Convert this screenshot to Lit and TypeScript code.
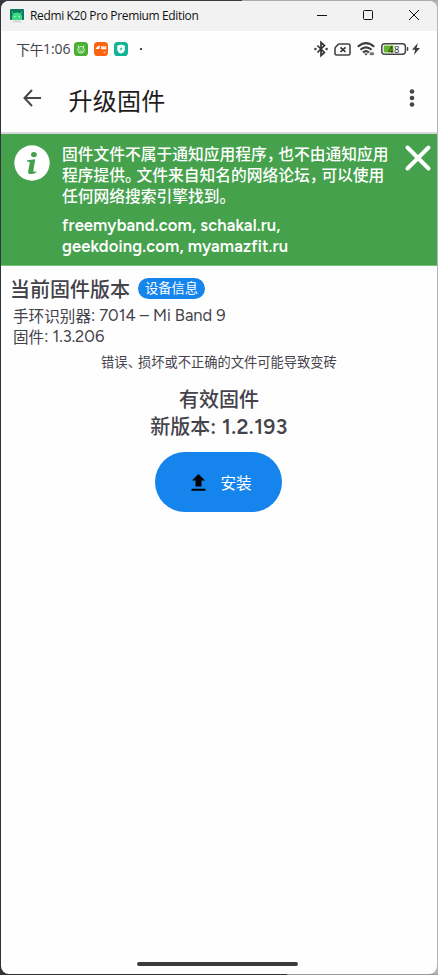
import { LitElement, html, css, svg } from "lit";
import { customElement } from "lit/decorators.js";

@customElement("app-root")
export class AppRoot extends LitElement {
  static styles = css`
    :host {
      display: block;
      width: 438px;
      height: 975px;
      overflow: hidden;
      box-sizing: border-box;
      padding: 1px 1px 1px 1px;
      background:
        linear-gradient(90deg, #3b3a42 0 242px, #aaa9ae 242px) top / 100% 1px no-repeat,
        linear-gradient(90deg, #333 0 287px, #999 287px) bottom / 100% 1px no-repeat,
        linear-gradient(90deg, #34333b 0 20px, #b5b5b5 20px);
      font-family: "Noto Sans CJK SC", sans-serif;
      color: #44434b;
    }
    * { box-sizing: border-box; }
    svg { display: block; flex: none; overflow: visible; }
    .window {
      height: 973px;
      display: flex;
      flex-direction: column;
      background: #fefefe;
      border-radius: 8px;
      overflow: hidden;
      white-space: nowrap;
    }
    .title {
      height: 30px;
      flex: none;
      background: #f2f2f2;
      display: flex;
      align-items: center;
      padding: 0 18px 0 9px;
      color: #111;
      font: 12px/30px "Open Sans", "Noto Sans", sans-serif;
    }
    .title .name { margin-left: 6px; flex: 1; letter-spacing: -0.36px; }
    .controls { display: flex; gap: 36px; align-items: center; margin-top: -2px; }
    .status {
      height: 36px;
      flex: none;
      display: flex;
      align-items: center;
      padding: 0 17px 0 15px;
      font-size: 14px;
    }
    .clock { display: flex; width: 55px; line-height: 20px; letter-spacing: -0.5px; }
    .clock .num { font-family: "Open Sans", sans-serif; font-size: 14px; letter-spacing: -0.1px; }
    .apps { display: flex; gap: 6px; margin-left: 2.5px; }
    .dot { width: 2px; height: 2px; background: #444; margin-left: 12px; flex: none; }
    .tray { margin-left: auto; display: flex; align-items: center; gap: 6px; }
    .charge { display: flex; align-items: center; gap: 3px; }
    .bar {
      height: 65px;
      flex: none;
      display: flex;
      align-items: center;
      padding: 0 22px 0 22px;
      color: #1d1c20;
    }
    .bar svg { margin-top: -4px; }
    .bar h1 { margin: 1px auto 0 26.5px; font-size: 24px; font-weight: 400; line-height: 36px; letter-spacing: 0.25px; }
    .banner {
      height: 134px;
      flex: none;
      border-top: 2px solid #d7d9d7;
      border-bottom: 1px solid #72c275;
      background: #46a14c;
      color: #fff;
      display: flex;
      padding: 11px 6px 0 13px;
      font-weight: 500;
    }
    .msg { margin: -2px auto 0 12px; font-size: 15.75px; line-height: 21px; }
    .msg div { height: 21px; }
    .p { letter-spacing: -4.2px; }
    .msg .links { margin-top: 9px; height: 42px; font-family: Figtree, Lato, sans-serif; font-weight: 600; font-size: 16.5px; letter-spacing: 0.15px; }
    .current { padding: 10px 0 0 9px; flex: none; }
    .head { display: flex; align-items: center; height: 25px; }
    .head h2 { margin: 0; font-size: 20px; font-weight: 500; line-height: 26px; }
    .pill {
      margin-left: 8px;
      width: 67px;
      height: 21px;
      border-radius: 11px;
      background: #1684ed;
      color: #fff;
      font-size: 13.3px;
      line-height: 20px;
      text-align: center;
    }
    .row { display: flex; height: 21px; line-height: 21px; font-size: 15.6px; padding-left: 3px; }
    .head + .row { margin-top: 4px; }
    .lat { font-family: Figtree, "Open Sans", sans-serif; white-space: pre; }
    .row .lat { font-size: 16.5px; }
    .warn { margin-top: 5px; text-align: center; font-size: 13.27px; line-height: 20px; }
    .warn .p { letter-spacing: -3px; }
    .result { text-align: center; margin-top: 13px; font-size: 20px; line-height: 27px; font-weight: 500; }
    .result .lat { font-weight: 600; font-size: 21px; letter-spacing: 0.4px; }
    .install {
      width: 127px;
      height: 60px;
      margin: 12px 0 0 154.4px;
      flex: none;
      border: 0;
      border-radius: 30px;
      background: #1684ed;
      color: #fff;
      display: flex;
      align-items: center;
      padding: 0 0 0 36px;
      font: 15.6px/24px "Noto Sans CJK SC", sans-serif;
    }
    .install span { margin-left: 14px; }
    .home { width: 161px; height: 4px; border-radius: 2px; background: #3b3939; margin: auto 0 8px 136px; flex: none; }
  `;

  private appIcon() {
    return html`<svg width="14" height="14" viewBox="0 0 14 14">
      <rect width="14" height="11" rx="1" fill="#0d7960" />
      <path d="M2 11V7.500a5 4 0 0 1 10 0V11z" fill="#3ddc84" />
      <path d="M3.500 5L2 2.500M10.500 5L12 2.500" stroke="#3ddc84" />
      <circle cx="4.8" cy="7.6" r=".7" fill="#fff" /><circle cx="9.2" cy="7.6" r=".7" fill="#fff" />
      <path d="M4 11.600h6l1.500 1.600H2.500z" fill="#d0d0d0" />
    </svg>`;
  }

  private badge(fill: string, glyph: unknown) {
    return html`<svg width="14" height="14" viewBox="0 0 14 14"><rect width="14" height="14" rx="3.6" fill=${fill} />${glyph}</svg>`;
  }

  render() {
    return html`<div class="window">
      <header class="title">
        ${this.appIcon()}<span class="name">Redmi K20 Pro Premium Edition</span>
        <div class="controls">
          <svg width="10" height="10" viewBox="0 0 10 10"><path d="M0 5.5h10" stroke="#111" /></svg>
          <svg width="10" height="10" viewBox="0 0 10 10"><rect x=".5" y=".5" width="9" height="9" rx="1" fill="none" stroke="#111" /></svg>
          <svg width="10" height="10" viewBox="0 0 10 10"><path d="M0 0l10 10M10 0L0 10" stroke="#111" /></svg>
        </div>
      </header>
      <div class="status">
        <div class="clock">下午<span class="num">1:06</span></div>
        <div class="apps">
          ${this.badge("#4caf35", svg`<g fill="none" stroke="#d9ffd0" stroke-width=".9"><circle cx="7" cy="7.8" r="3.3"/><path d="M4.8 5l-1-1.7M9.2 5l1-1.7M5.5 9q1.5 1 3 0"/></g><circle cx="5.8" cy="7.2" r=".6" fill="#d9ffd0"/><circle cx="8.2" cy="7.2" r=".6" fill="#d9ffd0"/>`)}
          ${this.badge("#fb6410", svg`<path d="M1.6 7q1-3 4.2-3.2L5.4 7zM7.2 4h5v3.2h-5z" fill="#fff"/><path d="M9 4v1.4M10.8 4v1.4" stroke="#fb6410" stroke-width=".8"/><rect x="9.6" y="9.8" width="1.8" height="1.4" fill="#ffc29b"/>`)}
          ${this.badge("#10b394", svg`<path d="M7 2.6l3.8 1.2v3.6Q10.600 10.200 7 11.600 3.400 10.200 3.200 7.400V3.800z" fill="#fff"/><path d="M7.600 4.500L5.500 7.500H7L6.400 9.600 8.600 6.500H7.200z" fill="#10b394"/>`)}
        </div>
        <span class="dot"></span>
        <div class="tray">
          <svg width="14" height="16" viewBox="0 0 14 16"><path d="M3.400 4.500l7 7L7 14.500V1.500l3.400 3-7 7" fill="none" stroke="#333" stroke-width="1.700"/><circle cx="1.400" cy="8" r="1.300" fill="#444"/><circle cx="12.600" cy="8" r="1.300" fill="#444"/></svg>
          <svg width="17" height="13" viewBox="0 0 17 13"><path d="M5.200 1H14.500Q16 1 16 2.500V10.500Q16 12 14.500 12H2.500Q1 12 1 10.500V5.300Q1 4.700 1.500 4.200L4 1.600Q4.500 1 5.200 1Z" fill="none" stroke="#444" stroke-width="1.600"/><path d="M6.500 4.300l5 4.700M11.500 4.300l-5 4.700" stroke="#333" stroke-width="1.600"/></svg>
          <svg width="18" height="14" viewBox="0 0 18 14"><g fill="none" stroke="#3d3d3d" stroke-width="2.100"><path d="M.8 4.700q8.200-7 16.400 0M3.400 7.700q5.600-4.600 11.200 0M6 10.400q3-2.500 6 0"/></g><path d="M7 11.500h4L9 13.500z" fill="#3d3d3d"/><rect x="12.500" y="10.300" width="4.500" height="3" rx="1.300" fill="#777"/></svg>
          <div class="charge">
            <svg width="28" height="12" viewBox="0 0 28 12"><rect x=".8" y=".8" width="23.600" height="10.400" rx="3" fill="#fff" stroke="#444" stroke-width="1.500"/><path d="M4 2.600h8.500v6.800H4q-1.300 0-1.300-1.300V3.900Q2.700 2.600 4 2.600z" fill="#62b82c"/><rect x="25.800" y="4" width="1.500" height="4" rx=".7" fill="#444"/><text x="7" y="9.500" font-family="Open Sans, sans-serif" font-size="9.500" fill="#222" textLength="11.500">48</text></svg>
            <svg width="8" height="12" viewBox="0 0 8 12"><path d="M5.800 0L0 6.800h3.200L1.800 12 8 5H4.600z" fill="#3d3d3d"/></svg>
          </div>
        </div>
      </div>
      <nav class="bar">
        <svg width="19" height="18" viewBox="0 0 19 18"><path d="M9 1L1.500 9 9 17M1.500 9H18" fill="none" stroke="#47464d" stroke-width="2"/></svg>
        <h1>升级固件</h1>
        <svg width="6" height="18" viewBox="0 0 6 18" fill="#46454c"><circle cx="3" cy="2.500" r="2.300"/><circle cx="3" cy="9" r="2.300"/><circle cx="3" cy="15.500" r="2.300"/></svg>
      </nav>
      <section class="banner">
        <svg width="36" height="36" viewBox="0 0 36 36"><circle cx="18" cy="18" r="17.700" fill="#fff"/><ellipse cx="19.900" cy="9.600" rx="2.900" ry="2.600" fill="#46a14c"/><path d="M13.200 15.300Q17 14.600 21.300 14.200L19.400 25.200q-.2 1.600 1 1.500l2-.3v1.200q-2.800 1.500-5.500 1.500-3.300 0-2.700-3.200l1.500-7.700q.3-1.400-1-1.500l-1.800-.1z" fill="#46a14c"/></svg>
        <div class="msg">
          <div>固件文件不属于通知应用程序<span class="p">，</span>也不由通知应用</div>
          <div>程序提供<span class="p">。</span>文件来自知名的网络论坛<span class="p">，</span>可以使用</div>
          <div>任何网络搜索引擎找到。</div>
          <div class="links">freemyband.com, schakal.ru,<br />geekdoing.com, myamazfit.ru</div>
        </div>
        <svg width="26" height="26" viewBox="0 0 26 26"><path d="M2.500 2.500l21 21M23.500 2.500l-21 21" stroke="#fff" stroke-width="4" stroke-linecap="round"/></svg>
      </section>
      <section class="current">
        <div class="head"><h2>当前固件版本</h2><span class="pill">设备信息</span></div>
        <div class="row">手环识别器<span class="lat">: 7014 – Mi Band 9</span></div>
        <div class="row">固件<span class="lat">: 1.3.206</span></div>
      </section>
      <div class="warn">错误<span class="p">、</span>损坏或不正确的文件可能导致变砖</div>
      <div class="result"><div>有效固件</div><div>新版本<span class="lat">: 1.2.193</span></div></div>
      <button class="install">
        <svg width="15" height="17" viewBox="0 0 15 17" fill="#000"><path d="M7.500 0L14 6.500H10.500V12.500H4.500V6.500H1zM.5 14.800h14v2H.5z"/></svg>
        <span>安装</span>
      </button>
      <div class="home"></div>
    </div>`;
  }
}
